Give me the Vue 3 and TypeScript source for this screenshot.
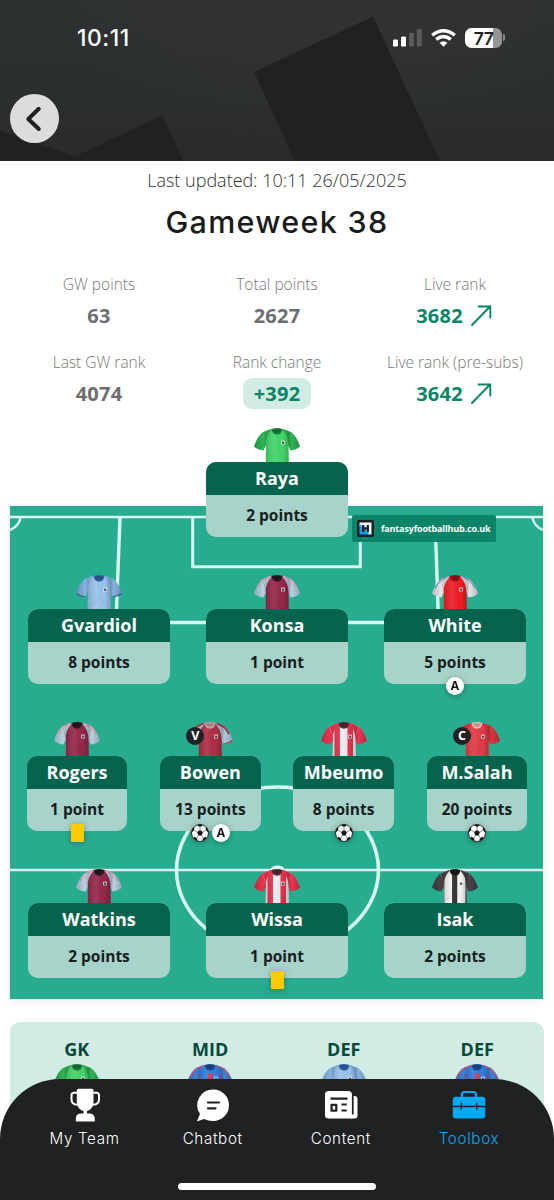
<script setup lang="ts">
interface Kit {
  id: string
  body: string
  sleeve: string
  collar: string
  shoulder?: string
  stripe?: string
  stripes?: string
  trim?: string
  cuff?: string
}
interface Player {
  name: string
  points: string
  kit: string
  armband?: string
  events?: string[]
}
interface Stat {
  label: string
  value: string
  kind: 'plain' | 'pill' | 'up'
}

const kits: Kit[] = [
  { id: 'keeper', body: '#43d66b', sleeve: '#2fb355', collar: '#1f7f3d' },
  { id: 'city', body: '#98c3ec', sleeve: '#86b3e2', collar: '#3463a8', cuff: '#2f6a86' },
  { id: 'villa', body: '#96284a', sleeve: '#b9d2e2', collar: '#2c1a22', shoulder: '#d9a9b6' },
  { id: 'arsenal', body: '#f01d25', sleeve: '#e6e6ea', collar: '#a3121b', trim: '#7c9cd0' },
  { id: 'westham', body: '#b02e46', sleeve: '#a9cbdc', collar: '#c9a0a0', shoulder: '#b02e46', cuff: '#c23d55' },
  {
    id: 'brentford',
    body: '#eeecee',
    sleeve: '#ee3350',
    collar: '#5a2a34',
    stripe: '#e5334e',
    stripes: 'M13.500 0H19V42H13.500ZM26.500 0H32V42H26.500Z',
  },
  { id: 'liverpool', body: '#e23c47', sleeve: '#dc3742', collar: '#eab9b9' },
  {
    id: 'newcastle',
    body: '#f4f4f4',
    sleeve: '#454346',
    collar: '#1d1c1e',
    stripe: '#2f2e30',
    stripes: 'M20 0H25.200V42H20ZM9.500 6H12.300V42H9.500ZM33.500 6H37V42H33.500Z',
  },
  {
    id: 'palace',
    body: '#2f7ee0',
    sleeve: '#3a84dc',
    collar: '#1f4d96',
    stripe: '#e23850',
    stripes: 'M9 9H13V42H9ZM20.800 9H25.200V42H20.800ZM33 9H37V42H33Z',
    trim: '#e8506a',
  },
]

const stats: Stat[] = [
  { label: 'GW points', value: '63', kind: 'plain' },
  { label: 'Total points', value: '2627', kind: 'plain' },
  { label: 'Live rank', value: '3682', kind: 'up' },
  { label: 'Last GW rank', value: '4074', kind: 'plain' },
  { label: 'Rank change', value: '+392', kind: 'pill' },
  { label: 'Live rank (pre-subs)', value: '3642', kind: 'up' },
]

const rows: Player[][] = [
  [{ name: 'Raya', points: '2 points', kit: 'keeper' }],
  [
    { name: 'Gvardiol', points: '8 points', kit: 'city' },
    { name: 'Konsa', points: '1 point', kit: 'villa' },
    { name: 'White', points: '5 points', kit: 'arsenal', events: ['assist'] },
  ],
  [
    { name: 'Rogers', points: '1 point', kit: 'villa', events: ['yellow'] },
    { name: 'Bowen', points: '13 points', kit: 'westham', armband: 'V', events: ['goal', 'assist'] },
    { name: 'Mbeumo', points: '8 points', kit: 'brentford', events: ['goal'] },
    { name: 'M.Salah', points: '20 points', kit: 'liverpool', armband: 'C', events: ['goal'] },
  ],
  [
    { name: 'Watkins', points: '2 points', kit: 'villa' },
    { name: 'Wissa', points: '1 point', kit: 'brentford', events: ['yellow'] },
    { name: 'Isak', points: '2 points', kit: 'newcastle' },
  ],
]

const bench = [
  { pos: 'GK', kit: 'keeper' },
  { pos: 'MID', kit: 'palace' },
  { pos: 'DEF', kit: 'city' },
  { pos: 'DEF', kit: 'palace' },
]
</script>

<template>
  <div class="screen">
    <svg class="defs" width="0" height="0" aria-hidden="true">
      <defs>
        <linearGradient id="shade" x1="0" y1="0" x2="1" y2="0">
          <stop offset="0" stop-color="#000" stop-opacity=".2" />
          <stop offset=".2" stop-color="#000" stop-opacity="0" />
          <stop offset=".26" stop-color="#000" stop-opacity=".14" />
          <stop offset=".45" stop-color="#fff" stop-opacity=".08" />
          <stop offset=".62" stop-color="#000" stop-opacity="0" />
          <stop offset=".75" stop-color="#000" stop-opacity=".2" />
          <stop offset=".82" stop-color="#000" stop-opacity="0" />
          <stop offset="1" stop-color="#000" stop-opacity=".22" />
        </linearGradient>
        <clipPath id="torso">
          <path d="M17 1Q23 5 29 1L37.500 4.500C36.500 10 34.500 13 34.500 18L35 42H11.500L12 18C12 13 10 10 8.500 4.500Z" />
        </clipPath>
        <symbol v-for="k in kits" :id="'kit-' + k.id" :key="k.id" viewBox="0 0 46 42">
          <path d="M17 1L9 4.300C5 6.500 2 13 0 18.500C2.500 20.800 5.500 22.200 9.500 22.600L12.500 16L14 5Z" :fill="k.sleeve" />
          <path d="M29 1L37 4.300C41 6.500 44 13 46 18.500C43.500 20.800 40.500 22.200 36.500 22.600L33.500 16L32 5Z" :fill="k.sleeve" />
          <g clip-path="url(#torso)">
            <path d="M0 0H46V42H0Z" :fill="k.body" />
            <path v-if="k.stripes" :d="k.stripes" :fill="k.stripe" />
            <path d="M16.500 0L8 2 8 8 11.500 17Q12 7.500 17.500 2ZM29.500 0L38 2 38 8 34.500 17Q34 7.500 28.500 2Z" :fill="k.sleeve" />
          </g>
          <path v-if="k.shoulder" d="M16.500 1.500L9.500 4.800Q6 7.500 4 12M29.500 1.500L36.500 4.800Q40 7.500 42 12" fill="none" :stroke="k.shoulder" stroke-width="1.800" />
          <path v-if="k.trim" d="M16.500 1.500L9.500 5Q6 7.500 3 13.500M29.500 1.500L36.500 5Q40 7.500 43 13.500" fill="none" :stroke="k.trim" stroke-width="1.200" />
          <path v-if="k.cuff" d="M.5 18.500Q4 21.500 9.500 22M45.500 18.500Q42 21.500 36.500 22" fill="none" :stroke="k.cuff" stroke-width="1.200" />
          <path d="M17 1L9 4.300C5 6.500 2 13 0 18.500C2.500 20.800 5.500 22.200 9.500 22.600L12 17.500V42H34.500V17.500L36.500 22.600C40.500 22.200 43.500 20.800 46 18.500C44 13 41 6.500 37 4.300L29 1Q23 4 17 1Z" fill="url(#shade)" />
          <path d="M14 31Q20 28 22 23M31 32Q27 29 26 24" fill="none" stroke="#000" stroke-opacity=".08" stroke-width="1" />
          <path d="M17.500 1Q23-.8 28.500 1Q28 6.500 23 6.800Q18 6.500 17.500 1Z" :fill="k.collar" />
          <path d="M19 1.500Q23 .6 27 1.500Q26.500 4.800 23 5Q19.500 4.800 19 1.500Z" fill="#000" fill-opacity=".2" />
          <path d="M27 12.500H31V16.500H27Z" fill="#e7e7e7" fill-opacity=".7" />
          <path d="M28 13.500L30.200 14V15.800H28.200Z" fill="#45464c" />
        </symbol>
      </defs>
    </svg>

    <header class="top">
      <svg class="shapes" viewBox="0 0 554 161" preserveAspectRatio="none">
        <path d="M373 16.500L254 72L295 161H440Z" />
        <path d="M0 131L75 156.500L162 115.500L183 161H0Z" />
      </svg>
      <div class="status">
        <span class="clock">10:11</span>
        <div class="indicators">
          <svg width="29" height="18" viewBox="0 0 29 18" fill="#fff">
            <rect x="0" y="10.500" width="5" height="7" rx="1.300" />
            <rect x="8" y="7.500" width="5" height="10" rx="1.300" />
            <rect x="16" y="3.700" width="5" height="13.800" rx="1.300" opacity=".2" />
            <rect x="23.800" y="0" width="5" height="17.500" rx="1.300" opacity=".2" />
          </svg>
          <svg class="wifi" width="25" height="18" viewBox="0 0 25 18" fill="none" stroke="#fff" stroke-width="3.400">
            <path d="M1.200 6.300Q12.500-2.900 23.800 6.300" />
            <path d="M5.200 10.400Q12.500 4.400 19.800 10.400" />
            <path d="M12.500 17.800L8.600 13.800Q12.500 10.700 16.400 13.800Z" fill="#fff" stroke="none" />
          </svg>
          <div class="battery"><span>77</span></div>
          <i class="nub"></i>
        </div>
      </div>
      <button class="back" aria-label="Back">
        <svg width="49" height="49" viewBox="0 0 49 49" fill="none" stroke="#202123" stroke-width="4" stroke-linecap="round" stroke-linejoin="round">
          <path d="M28.800 14.800L18.300 25L28.800 35" />
        </svg>
      </button>
    </header>

    <main>
      <p class="updated">Last updated: 10:11 26/05/2025</p>
      <h1>Gameweek 38</h1>

      <section class="stats">
        <div v-for="s in stats" :key="s.label" class="stat">
          <span class="label">{{ s.label }}</span>
          <span class="value" :class="s.kind">
            {{ s.value }}
            <svg v-if="s.kind === 'up'" width="21" height="21" viewBox="0 0 21 21" fill="none" stroke="#0b8468" stroke-width="1.900">
              <path d="M1 20L19 1.500M7.500 1.500H19.300V12.500" stroke-linecap="round" />
            </svg>
          </span>
        </div>
      </section>

      <section class="field">
        <svg class="pitch" viewBox="0 0 533 493" fill="none" stroke="#d6f8f2" stroke-width="3">
          <rect width="533" height="493" fill="#28ac8f" stroke="none" />
          <path d="M0 11H533" stroke-width="2.400" />
          <path d="M110 11L106 116.500H428.500L425 11" stroke-width="3.400" />
          <path d="M182.700 11V60.800H350.300V11" />
          <path d="M10.500 12Q9 20 0 24M522.500 12Q524 20 533 24" stroke-width="2.400" />
          <path d="M0 364H533" stroke-width="2.600" />
          <ellipse cx="267.500" cy="364" rx="101" ry="83" stroke-width="3.600" />
          <ellipse cx="267.500" cy="363.500" rx="7" ry="4" fill="#d6f8f2" stroke="none" />
        </svg>
        <div class="brand">
          <svg width="17" height="17" viewBox="0 0 17 17">
            <rect width="17" height="17" rx="1.800" fill="#1d2025" />
            <path d="M2.500 2.500H14.500V14.500H11L2.500 6Z" fill="#f4f7fa" />
            <path d="M2.500 4V14.500H13Z" fill="#0ba2ec" />
            <path d="M6.200 5V12M10.800 5V12M6 8.500H11" stroke="#1d2025" stroke-width="2.300" />
          </svg>
          <span>fantasyfootballhub.co.uk</span>
        </div>
        <div v-for="(row, r) in rows" :key="r" class="row" :class="{ four: row.length === 4 }">
          <article v-for="p in row" :key="p.name" class="player">
            <svg class="shirt" width="46" height="42"><use :href="'#kit-' + p.kit" /></svg>
            <span v-if="p.armband" class="armband">{{ p.armband }}</span>
            <div class="card">
              <div class="name">{{ p.name }}</div>
              <div class="points">{{ p.points }}</div>
            </div>
            <div v-if="p.events" class="events">
              <template v-for="e in p.events" :key="e">
                <i v-if="e === 'yellow'" class="yellow"></i>
                <span v-else-if="e === 'assist'" class="assist">A</span>
                <svg v-else class="ball" width="18" height="18" viewBox="0 0 18 18">
                  <circle cx="9" cy="9" r="8.500" fill="#fff" stroke="#1c1c1c" stroke-width=".9" />
                  <path d="M9 6L11.900 8.100L10.800 11.400H7.200L6.100 8.100Z" fill="#151515" />
                  <path d="M6 1.200Q9 0 12 1.200L9 3ZM.7 7Q1.300 4.200 3 2.700L3.200 6L.8 8.400ZM17.300 7Q16.700 4.200 15 2.700L14.800 6L17.200 8.400ZM2.500 14.200L3.300 12.600L6.200 14.600L6.600 17Q4 16.400 2.500 14.200ZM15.500 14.200L14.700 12.600L11.800 14.600L11.400 17Q14 16.400 15.500 14.200Z" fill="#151515" />
                  <path d="M9 3V6M3.200 6L6.100 8.100M14.800 6L11.900 8.100M7.200 11.400L5.800 14.200M10.800 11.400L12.200 14.200" stroke="#444" stroke-width=".6" />
                </svg>
              </template>
            </div>
          </article>
        </div>
      </section>

      <section class="bench">
        <div v-for="(b, i) in bench" :key="i" class="sub">
          <span>{{ b.pos }}</span>
          <svg width="46" height="42"><use :href="'#kit-' + b.kit" /></svg>
        </div>
      </section>
    </main>

    <nav class="tabs">
      <a class="tab">
        <svg width="34" height="34" viewBox="0 0 34 34" fill="#fff">
          <path d="M8.800 2.500Q8.800 .8 10.500 .8H23.800Q25.500 .8 25.500 2.500V14C25.500 19 22.500 22 19 23V25.600H21Q26.800 25.600 26.800 31V33.500H7.800V31Q7.800 25.600 13.500 25.600H15.500V23C12 22 8.800 19 8.800 14Z" />
          <path d="M9 4.800H6Q3.500 4.800 3.500 7.300V11.500Q3.500 16.500 9.500 16.800M25.500 4.800H28.500Q31 4.800 31 7.300V11.500Q31 16.500 25 16.800" fill="none" stroke="#fff" stroke-width="2" />
        </svg>
        <span>My Team</span>
      </a>
      <a class="tab">
        <svg width="34" height="34" viewBox="0 0 34 34">
          <path d="M17.500 1.500A15.700 15.700 0 1 1 17 33Q12 33 8 31L1.500 33.200Q.8 33.200 1.300 32.300L4 26A15.700 15.700 0 0 1 17.500 1.500Z" fill="#fff" />
          <path d="M12 14.500H23M12 20.300H19.500" stroke="#202123" stroke-width="2.200" stroke-linecap="round" />
        </svg>
        <span>Chatbot</span>
      </a>
      <a class="tab">
        <svg width="34" height="34" viewBox="0 0 34 34">
          <path d="M4.500 3H24Q28 3 28 7V30.500H4.500Q1 30.500 1 27V6.500Q1 3 4.500 3Z" fill="#fff" />
          <path d="M29.500 8H30.500Q33.500 8 33.500 11V27.500Q33.500 30.500 30.500 30.500H27V26H29.500Z" fill="#fff" />
          <path d="M28.600 8V26.500" stroke="#202123" stroke-width="1.400" />
          <path d="M6.500 10.700H23.500M17.500 16.500H22.700M17.500 22.500H22.700M7.500 16.800H12.300V22.700H7.500Z" fill="none" stroke="#202123" stroke-width="2.200" stroke-linejoin="round" />
        </svg>
        <span>Content</span>
      </a>
      <a class="tab active">
        <svg width="34" height="34" viewBox="0 0 34 34">
          <path d="M10 9V6.500Q10 4 12.500 4H21.500Q24 4 24 6.500V9" fill="none" stroke="#06a9f0" stroke-width="2.200" />
          <rect x=".8" y="8.800" width="32.500" height="21.700" rx="3" fill="#06a9f0" />
          <path d="M.8 18.500H33.300M9.400 14.700V21.800M24.800 14.700V21.800" stroke="#202123" stroke-width="1.500" />
        </svg>
        <span>Toolbox</span>
      </a>
      <i class="home"></i>
    </nav>
  </div>
</template>

<style>
html,
body {
  margin: 0;
  background: #fff;
  overflow: hidden;
}
</style>

<style scoped>
.screen {
  position: relative;
  width: 554px;
  height: 1200px;
  overflow: hidden;
  background: #fff;
  font-family: 'Open Sans', 'Noto Sans', sans-serif;
}
.defs {
  position: absolute;
}
.top {
  position: relative;
  height: 161px;
  background: radial-gradient(ellipse at 60% 0, #323234 0, rgba(50, 50, 52, 0) 60%), linear-gradient(#2e3132, #2b2e2f 60%, #2a2a2c);
}
.shapes {
  position: absolute;
  inset: 0;
  width: 100%;
  height: 100%;
  fill: #202123;
}
.status {
  position: relative;
  display: flex;
  justify-content: space-between;
  padding: 24px 49px 0 77px;
  height: 27px;
  align-items: center;
  color: #fff;
}
.clock {
  font: 500 22.800px/27px Inter, sans-serif;
  letter-spacing: 0.55px;
}
.indicators {
  display: flex;
  align-items: center;
}
.wifi {
  margin: 0 9px 0 9px;
}
.battery {
  width: 37px;
  height: 20px;
  border-radius: 6.500px;
  background: linear-gradient(90deg, #fff 77%, #949597 77%);
  color: #202123;
  text-align: center;
}
.battery span {
  font: 600 17.500px/20px Inter, sans-serif;
  letter-spacing: -0.4px;
}
.nub {
  width: 2px;
  height: 7px;
  margin-left: 1px;
  border-radius: 0 3px 3px 0;
  background: #8d8e8f;
}
.back {
  position: relative;
  display: block;
  width: 49px;
  height: 49px;
  margin: 43px 0 0 10px;
  padding: 0;
  border: 0;
  border-radius: 50%;
  background: #dcdcde;
}
.back svg {
  display: block;
}
.updated {
  margin: 0;
  padding-top: 7px;
  font-size: 18px;
  line-height: 25px;
  font-weight: 300;
  text-align: center;
  color: #303033;
}
h1 {
  margin: 9px 0 0;
  font: 500 30.500px/40px Inter, sans-serif;
  letter-spacing: 1.3px;
  text-align: center;
  color: #1a1b1d;
}
.stats {
  display: grid;
  grid-template-columns: repeat(3, 1fr);
  grid-auto-rows: 78px;
  width: 534px;
  margin: 31px auto 0;
}
.stat {
  display: flex;
  flex-direction: column;
  align-items: center;
}
.label {
  font-size: 15.500px;
  line-height: 22px;
  font-weight: 300;
  color: #77787b;
}
.value {
  display: flex;
  align-items: center;
  height: 31px;
  margin-top: 5px;
  font-size: 20px;
  letter-spacing: 0.2px;
  font-weight: 700;
  color: #6d6e70;
}
.value svg {
  margin-left: 8px;
}
.up,
.pill {
  color: #0b8468;
}
.up {
  margin-left: -2px;
}
.pill {
  padding: 0 10.500px;
  border-radius: 9px;
  background: #d0ece4;
}
.field {
  position: relative;
  width: 534px;
  height: 571px;
  margin: -1px auto 0;
}
.pitch {
  position: absolute;
  left: 0;
  top: 78px;
  width: 533px;
  height: 493px;
  box-shadow: 0 2px 8px rgba(90, 50, 50, 0.1);
}
.brand {
  position: absolute;
  left: 342px;
  top: 87px;
  display: flex;
  align-items: center;
  gap: 7px;
  box-sizing: border-box;
  width: 144px;
  height: 27px;
  padding-left: 5px;
  border-radius: 2px;
  background: #0b8468;
  color: #fff;
  font-size: 9px;
  font-weight: 700;
}
.brand span {
  letter-spacing: -0.16px;
}
.row {
  position: relative;
  display: flex;
  justify-content: center;
  height: 147px;
}
.player {
  position: relative;
  display: flex;
  flex-direction: column;
  align-items: center;
  width: 178px;
}
.four .player {
  width: 133.300px;
}
.shirt {
  display: block;
  flex: none;
  margin-bottom: -8px;
}
.card {
  position: relative;
  width: 142px;
  height: 75px;
  border-radius: 10px;
  overflow: hidden;
  text-align: center;
  background: #a8d3ca;
}
.four .card {
  width: 100.500px;
}
.name {
  height: 33px;
  background: #06634e;
  color: #fff;
  font-size: 18px;
  line-height: 33px;
  font-weight: 700;
}
.points {
  font-size: 15.500px;
  line-height: 41px;
  font-weight: 700;
  color: #16211f;
}
.armband {
  position: absolute;
  top: 5px;
  left: calc(50% - 24px);
  width: 18px;
  height: 18px;
  border-radius: 50%;
  background: #202123;
  color: #fff;
  font-size: 12.500px;
  line-height: 17.500px;
  font-weight: 700;
  text-align: center;
}
.events {
  position: relative;
  display: flex;
  gap: 3px;
  margin-top: -7px;
  filter: drop-shadow(0 1px 3px rgba(0, 0, 0, 0.3));
}
.yellow {
  width: 13px;
  height: 18px;
  border-radius: 1px;
  background: #fecb00;
}
.assist {
  width: 18px;
  height: 18px;
  border-radius: 50%;
  background: #fff;
  color: #151515;
  font-size: 12px;
  line-height: 18px;
  font-weight: 700;
  text-align: center;
}
.bench {
  display: flex;
  width: 534px;
  height: 178px;
  margin: 23px auto 0;
  border-radius: 10px;
  background: #d0ece4;
}
.sub {
  flex: 1;
  display: flex;
  flex-direction: column;
  align-items: center;
}
.sub span {
  margin-top: 15px;
  font-size: 18px;
  line-height: 24px;
  font-weight: 700;
  color: #06483a;
}
.sub svg {
  margin-top: 3px;
}
.tabs {
  position: absolute;
  left: 0;
  bottom: 0;
  display: flex;
  box-sizing: border-box;
  width: 554px;
  height: 121px;
  padding: 9px 21px 0 20.500px;
  border-radius: 60px 60px 0 0;
  background: #202123;
}
.tab {
  flex: 1;
  display: flex;
  flex-direction: column;
  align-items: center;
  color: #fff;
}
.tab span {
  margin-top: 6px;
  font: 300 15.200px/22px Inter, sans-serif;
  letter-spacing: 0.65px;
}
.active {
  color: #06a9f0;
}
.home {
  position: absolute;
  left: 178px;
  bottom: 10px;
  width: 198px;
  height: 7px;
  border-radius: 4px;
  background: #fff;
}
</style>
